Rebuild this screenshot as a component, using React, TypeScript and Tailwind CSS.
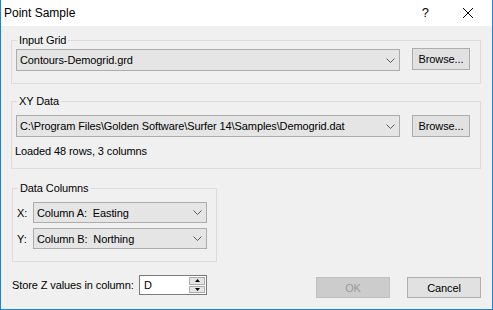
import React from 'react';

const Chevron = () => (
  <svg width="9" height="5" viewBox="0 0 9 5" className="shrink-0">
    <path d="M0.5 0.5 L4.5 4.5 L8.5 0.5" fill="none" stroke="#5a5a5a" strokeWidth={1} />
  </svg>
);

function Combo({ text, className = '' }: { text: string; className?: string }) {
  return (
    <div
      className={`flex items-center justify-between border border-[#acacac] bg-[#e5e5e5] pl-[3px] pr-[4px] ${className}`}
    >
      <span className="whitespace-pre leading-[14px]">{text}</span>
      <Chevron />
    </div>
  );
}

function Button({ label, className = '', disabled = false }: { label: string; className?: string; disabled?: boolean }) {
  return (
    <div
      className={`flex items-center justify-center border leading-[14px] ${
        disabled ? 'border-[#bfbfbf] bg-[#cccccc] text-[#9a9a9a]' : 'border-[#adadad] bg-[#e1e1e1]'
      } ${className}`}
    >
      {label}
    </div>
  );
}

function Group({ title, className = '', children }: { title: string; className?: string; children: React.ReactNode }) {
  return (
    <div className={`relative border border-[#dcdcdc] ${className}`}>
      <span className="absolute -top-[8px] left-[5px] bg-[#f0f0f0] px-[2px] leading-[14px]">{title}</span>
      {children}
    </div>
  );
}

export default function App() {
  return (
    <div className="flex h-[310px] w-[493px] flex-col border-x border-b border-[#1a82d8] bg-[#f0f0f0] font-['Liberation_Sans',Arial,sans-serif] text-[11px] tracking-[-0.1px] text-black">
      {/* title bar */}
      <div className="flex h-[26px] shrink-0 items-center bg-white pr-[19px] tracking-normal">
        <span className="pl-[3px] text-[12px] leading-[14px]">Point Sample</span>
        <span className="ml-auto text-[13px] leading-[14px]">?</span>
        <svg width="10" height="10" viewBox="0 0 10 10" className="ml-[34px] -mt-[1px]">
          <path d="M0 0 L10 10 M10 0 L0 10" stroke="#000" strokeWidth={1} />
        </svg>
      </div>

      <div className="flex flex-col pl-[10px]">
        <Group title="Input Grid" className="mt-[14px] h-[44px] w-[470px]">
          <div className="flex items-start pl-[4px] pt-[7px]">
            <Combo text="Contours-Demogrid.grd" className="mt-[1px] h-[22px] w-[384px]" />
            <Button label="Browse..." className="ml-[12px] h-[22px] w-[58px]" />
          </div>
        </Group>

        <Group title="XY Data" className="mt-[17px] h-[68px] w-[470px]">
          <div className="flex items-start pl-[4px] pt-[13px]">
            <Combo text="C:\Program Files\Golden Software\Surfer 14\Samples\Demogrid.dat" className="h-[22px] w-[384px]" />
            <Button label="Browse..." className="ml-[12px] h-[22px] w-[58px]" />
          </div>
          <div className="mt-[7px] pl-[3px] leading-[14px]">Loaded 48 rows, 3 columns</div>
        </Group>

        <Group title="Data Columns" className="ml-[1px] mt-[19px] h-[74px] w-[205px]">
          <div className="flex flex-col gap-[5px] pl-[4px] pt-[13px]">
            <div className="flex items-center">
              <span className="w-[16px] leading-[14px]">X:</span>
              <Combo text="Column A:  Easting" className="h-[21px] w-[174px]" />
            </div>
            <div className="flex items-center">
              <span className="w-[16px] leading-[14px]">Y:</span>
              <Combo text="Column B:  Northing" className="h-[21px] w-[174px]" />
            </div>
          </div>
        </Group>

        <div className="ml-[1px] mt-[13px] flex w-[469px] items-start">
          <div className="flex items-center">
            <span className="w-[127px] leading-[14px]">Store Z values in column:</span>
            <div className="flex h-[20px] w-[68px] items-stretch border border-[#7a7a7a] bg-white">
              <span className="flex-1 self-center pl-[4px] leading-[14px]">D</span>
              <div className="flex w-[17px] flex-col gap-px p-px pl-0">
                <div className="flex flex-1 items-center justify-center border border-[#acacac] bg-[#e5e5e5]">
                  <svg width="5" height="3" viewBox="0 0 5 3">
                    <path d="M0 3 L2.5 0 L5 3 Z" fill="#000" />
                  </svg>
                </div>
                <div className="flex flex-1 items-center justify-center border border-[#acacac] bg-[#e5e5e5]">
                  <svg width="5" height="3" viewBox="0 0 5 3">
                    <path d="M0 0 L2.5 3 L5 0 Z" fill="#000" />
                  </svg>
                </div>
              </div>
            </div>
          </div>
          <Button label="OK" disabled className="ml-auto mt-[2px] h-[21px] w-[74px]" />
          <Button label="Cancel" className="ml-[17px] mt-[2px] h-[21px] w-[74px]" />
        </div>
      </div>
    </div>
  );
}
